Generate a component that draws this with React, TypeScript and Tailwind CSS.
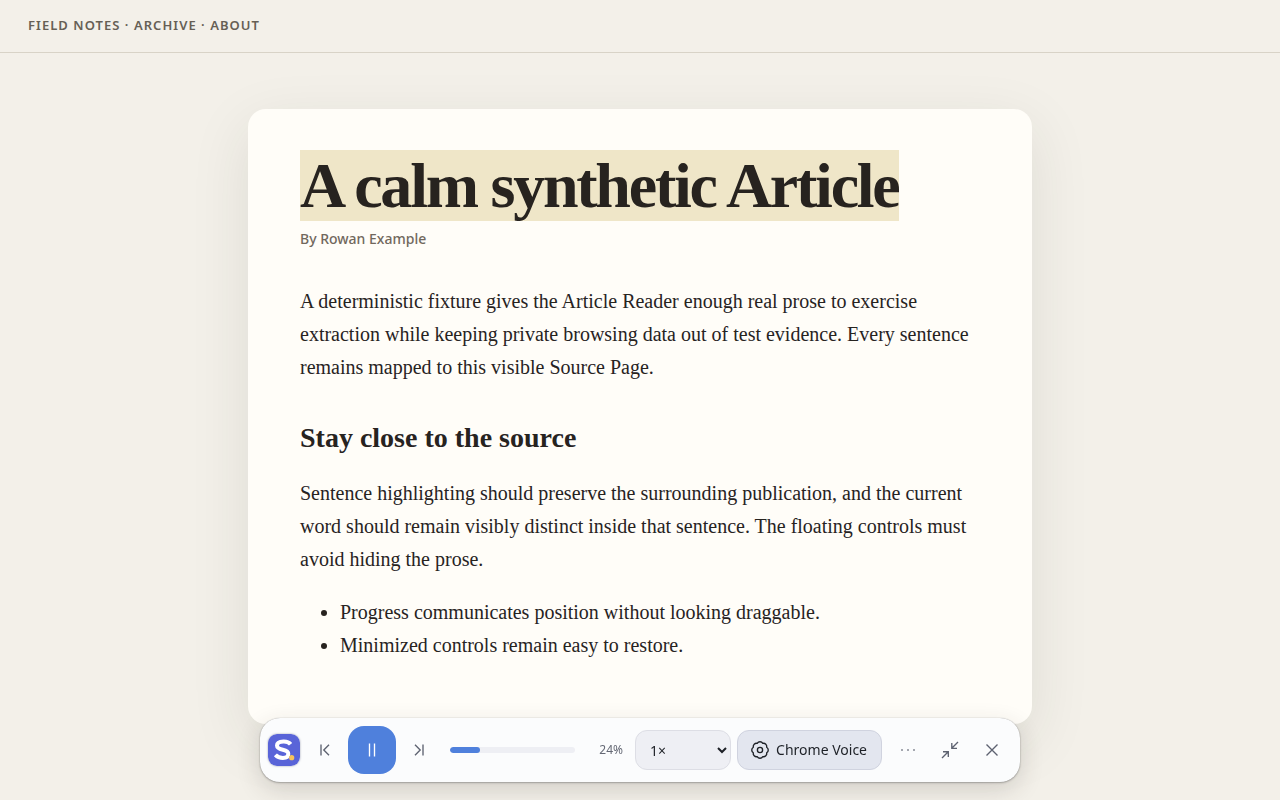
import type { ButtonHTMLAttributes, ReactNode } from "react";

const PARAGRAPH = "mb-5 text-xl leading-[33px]";

const PROGRESS = 24;

const LIST_ITEMS = [
  "Progress communicates position without looking draggable.",
  "Minimized controls remain easy to restore.",
];

const Icon = ({ children, size = 20 }: { children: ReactNode; size?: number }) => (
  <svg
    width={size}
    height={size}
    viewBox="0 0 20 20"
    fill="none"
    stroke="currentColor"
    strokeWidth="1.35"
    aria-hidden="true"
  >
    {children}
  </svg>
);

const IconButton = (props: ButtonHTMLAttributes<HTMLButtonElement>) => (
  <button
    type="button"
    className="flex size-10 shrink-0 items-center justify-center rounded-xl text-[#5d6270] disabled:text-[#a5a8b0]"
    {...props}
  />
);

const Logo = () => (
  <svg width="32" height="32" viewBox="0 0 32 32" fill="none" aria-hidden="true" className="shrink-0 rounded-[9px] shadow-[0_0_2px_rgba(40,45,90,0.5)]">
    <rect width="32" height="32" rx="8" fill="#5964d8" />
    <path
      d="M22.6 10.2C21 8 18.4 7.3 15.4 7.4C11.6 7.5 9 9 9 11.5C9 14 11.2 14.9 14.8 15.7C18.5 16.5 20.3 17.4 20.3 19.7C20.3 22.5 18.3 23.9 14.9 23.9C11.6 23.9 9.2 22.8 7.4 20.8"
      stroke="white"
      strokeWidth="4"
    />
    <circle cx="23.7" cy="23.7" r="2.6" fill="#f8c45c" />
  </svg>
);

const ReaderBar = () => {
  return (
    <section
      aria-label="Article Reader"
      className="fixed inset-x-5 bottom-[18px] mx-auto flex max-w-[760px] items-center rounded-[20px] bg-[#fbfcfd] p-2 font-['Noto_Sans',sans-serif] shadow-[0_0_1px_rgba(40,40,40,0.4),0_1px_2px_rgba(40,40,40,0.3),0_8px_24px_rgba(50,45,35,0.16)]"
    >
      <Logo />
      <div className="ml-[6px] flex items-center gap-[2px]">
        <IconButton aria-label="Previous sentence">
          <Icon>
            <path d="M5 4.5v11M13 4.8 7.8 10l5.2 5.2" />
          </Icon>
        </IconButton>
        <button
          type="button"
          aria-label="Pause"
          className="flex size-12 shrink-0 items-center justify-center rounded-2xl bg-[#4f80dc] text-white"
        >
          <Icon>
            <path d="M7.5 3.5v13M12.5 3.5v13" />
          </Icon>
        </button>
        <IconButton aria-label="Next sentence">
          <Icon>
            <path d="M15 4.5v11M7 4.8l5.2 5.2L7 15.2" />
          </Icon>
        </IconButton>
      </div>
      <div
        role="progressbar"
        aria-label="Reading progress"
        aria-valuenow={PROGRESS}
        aria-valuemin={0}
        aria-valuemax={100}
        className="ml-3 h-[6px] flex-1 overflow-hidden rounded-full bg-[#eeeff4]"
      >
        <div className="h-full rounded-full bg-[#4f80dc]" style={{ width: `${PROGRESS}%` }} />
      </div>
      <span className="w-12 text-right text-xs text-[#656975]">{PROGRESS}%</span>
      <select
        aria-label="Reading speed"
        defaultValue="1"
        className="ml-3 h-10 w-24 rounded-xl border border-[#dddee5] bg-[#eeeff4] px-[10px] pr-0 text-sm text-[#1d2026]"
      >
        <option value="0.75">0.75×</option>
        <option value="1">1×</option>
        <option value="1.5">1.5×</option>
        <option value="2">2×</option>
      </select>
      <button
        type="button"
        className="mx-[6px] flex h-10 shrink-0 items-center gap-[6px] rounded-xl border border-[#d0d3df] bg-[#e3e6ef] pr-[14px] pl-3 text-sm whitespace-nowrap text-[#1d2026]"
      >
        <Icon>
          <path
            d="M7.2 3.3A3.3 3.3 0 0 1 12.8 3.3A3.3 3.3 0 0 1 16.7 7.2A3.3 3.3 0 0 1 16.7 12.8A3.3 3.3 0 0 1 12.8 16.7A3.3 3.3 0 0 1 7.2 16.7A3.3 3.3 0 0 1 3.3 12.8A3.3 3.3 0 0 1 3.3 7.2A3.3 3.3 0 0 1 7.2 3.3Z"
            strokeLinejoin="round"
          />
          <circle cx="10" cy="10" r="2.6" />
        </Icon>
        Chrome Voice
      </button>
      <div className="flex items-center gap-[2px]">
        <IconButton aria-label="More options" disabled>
          <Icon>
            <path d="M3 10h2M9 10h2M15 10h2" strokeWidth="2" />
          </Icon>
        </IconButton>
        <IconButton aria-label="Minimize">
          <Icon>
            <path d="M18 2l-6 6M11.8 3v5.3H17M2 18l6-6M3 11.7h5.3V17" />
          </Icon>
        </IconButton>
        <IconButton aria-label="Close">
          <Icon>
            <path d="M4.5 4.5l11 11M15.5 4.5l-11 11" />
          </Icon>
        </IconButton>
      </div>
    </section>
  );
};

const App = () => {
  return (
    <div className="min-h-screen bg-[#f3f0e9] font-['Liberation_Serif',serif] text-[#27231f]">
      <header className="border-b border-[#d8d3c7] px-7 pt-4 pb-[18px] font-['Noto_Sans',sans-serif] text-[13px] leading-[18px] font-semibold tracking-[0.08em] text-[#665f55]">
        FIELD NOTES · ARCHIVE · ABOUT
      </header>
      <main className="px-5 pt-14 pb-5">
        <article className="mx-auto max-w-[784px] rounded-[18px] bg-[#fffdf8] px-[52px] pt-11 pb-[42px] shadow-[0_18px_60px_rgba(40,45,35,0.1)]">
          <h1 className="text-[64px] leading-[66px] font-bold tracking-[-0.035em]">
            <span className="bg-[#efe6c8]">A calm synthetic Article</span>
          </h1>
          <p className="mt-[10px] mb-9 font-['Noto_Sans',sans-serif] text-sm font-medium text-[#71685d]">
            By Rowan Example
          </p>
          <p className={PARAGRAPH}>
            A deterministic fixture gives the Article Reader enough real prose to exercise extraction
            while keeping private browsing data out of test evidence. Every sentence remains mapped to
            this visible Source Page.
          </p>
          <h2 className="mt-9 mb-[21px] text-[28px] leading-9 font-bold">Stay close to the source</h2>
          <p className={PARAGRAPH}>
            Sentence highlighting should preserve the surrounding publication, and the current word
            should remain visibly distinct inside that sentence. The floating controls must avoid
            hiding the prose.
          </p>
          <ul className="mb-5 list-disc pl-10 text-xl leading-[33px]">
            {LIST_ITEMS.map((item) => (
              <li key={item}>{item}</li>
            ))}
          </ul>
        </article>
      </main>
      <ReaderBar />
    </div>
  );
};

export default App;
